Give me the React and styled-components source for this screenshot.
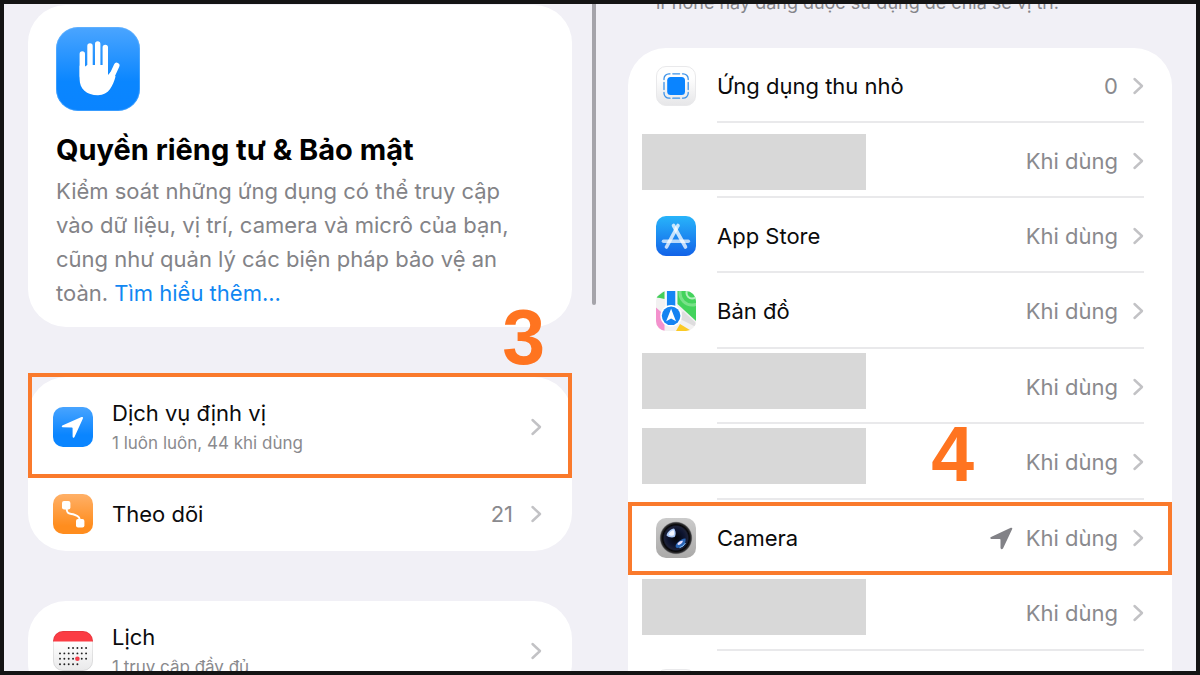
import React from 'react';
import styled, { createGlobalStyle } from 'styled-components';

const GlobalStyle = createGlobalStyle`
  * {
    box-sizing: border-box;
  }

  body {
    margin: 0;
    font-family: Inter, 'Noto Sans', sans-serif;
    color: #0b0b0c;
  }
`;

const Frame = styled.div`
  display: flex;
  height: 100vh;
  border: 4px solid #141414;
  background: #f1f0f6;
  overflow: hidden;
`;

const Pane = styled.section`
  position: relative;
  flex: 1;
  min-width: 0;
  overflow: hidden;
`;

const LeftScroll = styled.div`
  display: flex;
  flex-direction: column;
  gap: 50px;
  padding: 1px 28px 0 24px;
`;

const RightScroll = styled.div`
  margin-top: -13px;
  padding: 0 24px 0 28px;
`;

const ScrollThumb = styled.div`
  position: absolute;
  top: 0;
  right: 4px;
  width: 4px;
  height: 301px;
  border-radius: 0 0 2px 2px;
  background: #a5a4aa;
`;

const Card = styled.div`
  border-radius: 38px;
  background: #fff;
`;

const IntroCard = styled(Card)`
  padding: 22px 28px 17px;
`;

const Title = styled.h1`
  margin: 21px 0 6px;
  font-size: 29px;
  font-weight: 700;
  line-height: 36px;
  color: #000;
`;

const Intro = styled.p`
  margin: 0;
  font-size: 22px;
  line-height: 34px;
  color: #838387;
`;

const Link = styled.a`
  color: #1187f2;
  text-decoration: none;
`;

const Note = styled.p`
  margin: 0 28px 33px;
  font-size: 18px;
  line-height: 24px;
  color: #85858a;
  white-space: nowrap;
`;

const RowButton = styled.button`
  position: relative;
  display: flex;
  gap: ${(p) => (p.$divided ? 21 : 19)}px;
  width: 100%;
  min-height: ${(p) => p.$height}px;
  padding: 0 ${(p) => (p.$divided ? 28 : 30)}px 0 ${(p) => (p.$divided ? 28 : 25)}px;
  border: 0;
  background: none;
  font: inherit;
  color: inherit;
  text-align: left;
  cursor: pointer;
`;

const IconSlot = styled.span`
  display: flex;
  align-items: center;
  width: 40px;
  flex: none;
`;

const RowBody = styled.span`
  display: flex;
  flex: 1;
  align-items: center;
  min-width: 0;
  box-shadow: ${(p) => (p.$divided ? 'inset 0 -2px #e9e9eb' : 'none')};
`;

const Texts = styled.span`
  display: flex;
  flex: 1;
  flex-direction: column;
  gap: 2px;
`;

const Label = styled.span`
  font-size: 22px;
  line-height: 30px;
`;

const Sub = styled.span`
  font-size: 17px;
  line-height: 26px;
  color: #8a8a8e;
`;

const Value = styled.span`
  display: flex;
  align-items: center;
  gap: 12px;
  margin-right: ${(p) => (p.$divided ? 14 : 17)}px;
  font-size: 22px;
  line-height: 30px;
  color: #8a8a8e;
`;

const Mask = styled.span`
  position: absolute;
  top: ${(p) => p.$top}px;
  left: 14px;
  width: 224px;
  height: 56px;
  background: #d8d8d8;
`;

const Highlight = styled.span`
  position: absolute;
  inset: ${(p) => p.$inset};
  border: 4px solid #fa7a2c;
  pointer-events: none;
`;

const Step = styled.span`
  position: absolute;
  top: ${(p) => p.$top}px;
  right: ${(p) => p.$right}px;
  font-family: 'Liberation Sans', Arial, sans-serif;
  font-size: 77px;
  font-weight: 700;
  line-height: 56px;
  color: #ff7420;
`;

const Chevron = () => (
  <svg width="12" height="20" viewBox="0 0 12 20" fill="none" aria-hidden="true">
    <path d="M2.500 3 10 10 2.500 17" stroke="#c2c2c5" strokeWidth="2.400" strokeLinecap="round" strokeLinejoin="round" />
  </svg>
);

const HandIcon = () => (
  <svg width="84" height="84" viewBox="0 0 84 84" display="block" aria-hidden="true">
    <defs>
      <linearGradient id="hand-bg" x1="0" y1="0" x2="0" y2="1">
        <stop offset="0" stopColor="#4ba5ff" />
        <stop offset="0.65" stopColor="#0a86ff" />
        <stop offset="1" stopColor="#0a84ff" />
      </linearGradient>
    </defs>
    <rect width="84" height="84" rx="22" fill="url(#hand-bg)" />
    <rect x="0.5" y="0.5" width="83" height="83" rx="21.5" fill="none" stroke="#7cc0ff" strokeOpacity="0.4" />
    <g stroke="#fff" strokeWidth="5.4" strokeLinecap="round" fill="none">
      <path d="M26.300 27v22M34 19v26M41.700 17v26M49.300 20.500v26" />
      <path d="M60.700 38.500 54.500 52" strokeWidth="5.600" />
    </g>
    <path
      d="M23.600 38.500c2 2.500 4 2.500 5.500 1l2.200-1.500h20.700V48l4-4.500 3.500 6c-2.500 9-6.500 18.700-17.500 18.700-11.600 0-18.400-6.200-18.400-16.200z"
      fill="#fff"
    />
  </svg>
);

const LocationIcon = () => (
  <svg width="40" height="40" viewBox="0 0 40 40" aria-hidden="true">
    <defs>
      <linearGradient id="loc-bg" x1="0" y1="0" x2="0" y2="1">
        <stop offset="0" stopColor="#48a4ff" />
        <stop offset="0.7" stopColor="#0a85ff" />
      </linearGradient>
    </defs>
    <rect width="40" height="40" rx="10" fill="url(#loc-bg)" />
    <path
      d="M9.300 18.600 28.500 10.100q2.200-.7 1.400 1.500L21.500 30q-1.500 1.900-1.900-.4V21.200q0-.8-.8-.8L9.500 20.300q-1.600-.7-.2-1.700z"
      fill="#fff"
    />
  </svg>
);

const TrackingIcon = () => (
  <svg width="40" height="40" viewBox="0 0 40 40" aria-hidden="true">
    <defs>
      <linearGradient id="track-bg" x1="0" y1="0" x2="0" y2="1">
        <stop offset="0" stopColor="#ffb067" />
        <stop offset="0.8" stopColor="#ff8d1e" />
      </linearGradient>
    </defs>
    <rect width="40" height="40" rx="10" fill="url(#track-bg)" />
    <path d="M13.500 12c0 10 3.500 7 8 8.700 4.500 1.500 5.700 3 5.700 9" stroke="#fff" strokeWidth="2" fill="none" />
    <rect x="9" y="7" width="8.400" height="8.400" rx="2" fill="#fff" />
    <rect x="23" y="25" width="8.400" height="8.400" rx="2" fill="#fff" />
  </svg>
);

const calendarRows = [
  [2, 7],
  [0, 7],
  [0, 7],
  [0, 5],
];

const CalendarIcon = () => (
  <svg width="40" height="40" viewBox="0 0 40 40" aria-hidden="true">
    <defs>
      <linearGradient id="cal-bg" x1="0" y1="0" x2="0" y2="1">
        <stop offset="0.3" stopColor="#fdfdfd" />
        <stop offset="1" stopColor="#e9e9ea" />
      </linearGradient>
      <clipPath id="cal-clip">
        <rect width="40" height="40" rx="10" />
      </clipPath>
    </defs>
    <g clipPath="url(#cal-clip)">
      <rect width="40" height="40" fill="url(#cal-bg)" />
      <rect width="40" height="10.500" fill="#fb3c44" />
    </g>
    <rect x="0.5" y="0.5" width="39" height="39" rx="9.500" fill="none" stroke="#000" strokeOpacity="0.08" />
    {calendarRows.map(([from, to], y) =>
      Array(to - from).fill(0).map((_, i) => (
        <circle key={`${y}-${i}`} cx={7 + (from + i) * 4.350} cy={17 + y * 5.400} r="0.950" fill="#222" />
      ))
    )}
    <circle cx="24.400" cy="27.800" r="2.300" fill="#f5404c" />
  </svg>
);

const ClipIcon = () => (
  <svg width="40" height="40" viewBox="0 0 40 40" aria-hidden="true">
    <defs>
      <linearGradient id="clip-bg" x1="0" y1="0" x2="0" y2="1">
        <stop offset="0.3" stopColor="#fefefe" />
        <stop offset="1" stopColor="#e6e6e8" />
      </linearGradient>
    </defs>
    <rect x="0.5" y="0.5" width="39" height="39" rx="9.500" fill="url(#clip-bg)" stroke="#e9e9eb" />
    <rect x="11.200" y="11" width="17.800" height="18" rx="3.500" fill="#0a84ff" />
    <g fill="none" stroke="#3c92e8" strokeWidth="1.300" strokeLinecap="round">
      <path d="M8 13.500v-.7A5 5 0 0 1 13 7.800h1M26.500 7.800h.7a5 5 0 0 1 5 5v.7M32.200 26.500v.7a5 5 0 0 1-5 5h-.7M14 32.200h-1a5 5 0 0 1-5-5v-.7" />
      <path d="M16.800 7.800h6.800M16.800 32.200h6.800M8 16.500v7M32.200 16.500v7" />
    </g>
  </svg>
);

const AppStoreIcon = () => (
  <svg width="40" height="40" viewBox="0 0 40 40" aria-hidden="true">
    <defs>
      <linearGradient id="store-bg" x1="0" y1="0" x2="0" y2="1">
        <stop offset="0" stopColor="#28b4fa" />
        <stop offset="1" stopColor="#1262e8" />
      </linearGradient>
    </defs>
    <rect width="40" height="40" rx="10" fill="url(#store-bg)" />
    <g stroke="#fff" strokeWidth="3.600" strokeLinecap="round" fill="none">
      <path d="M7.500 25.200h24.800" strokeOpacity="0.7" />
      <path d="M22 9.500 10.500 31" strokeOpacity="0.75" />
      <path d="M17.500 9.500 29.500 31" strokeOpacity="0.75" />
    </g>
  </svg>
);

const MapIcon = () => (
  <svg width="40" height="40" viewBox="0 0 40 40" aria-hidden="true">
    <defs>
      <clipPath id="map-clip">
        <rect width="40" height="40" rx="10" />
      </clipPath>
    </defs>
    <g clipPath="url(#map-clip)">
      <rect width="40" height="40" fill="#f2f1f1" />
      <path d="M0 6.500 8.500 0v8L4 7z" fill="#43cf59" />
      <path d="M21.500 0H40v30L21.500 13z" fill="#43d35c" />
      <g fill="none" stroke="#b3f0bc">
        <circle cx="36" cy="2" r="5.500" strokeWidth="2" />
        <circle cx="36" cy="2" r="12" stroke="#78e188" strokeWidth="3" />
      </g>
      <path d="M0 16.500 8.500 24V40H0z" fill="#f391cd" />
      <path d="M24 33 35.500 40H20z" fill="#fbca24" />
      <path d="M27 20 40 32v4L22 27z" fill="#deddde" />
      <rect x="9.500" width="11" height="18" fill="#fff" />
      <rect x="10.900" width="8.400" height="18" fill="#1585f4" />
      <circle cx="15.100" cy="24.800" r="10.800" fill="#fff" />
      <circle cx="15.100" cy="24.800" r="9.300" fill="#1583f1" />
      <path d="M15.100 17.800 20 30.300 15.100 27.600 10.200 30.300z" fill="#fff" />
    </g>
  </svg>
);

const CameraIcon = () => (
  <svg width="40" height="40" viewBox="0 0 40 40" aria-hidden="true">
    <defs>
      <linearGradient id="cam-bg" x1="0" y1="0" x2="0" y2="1">
        <stop offset="0" stopColor="#cbcbcb" />
        <stop offset="1" stopColor="#aaa9a8" />
      </linearGradient>
      <radialGradient id="cam-lens">
        <stop offset="0" stopColor="#030508" />
        <stop offset="0.5" stopColor="#0d1430" />
        <stop offset="0.72" stopColor="#1c2138" />
        <stop offset="0.82" stopColor="#050507" />
        <stop offset="0.93" stopColor="#303032" />
        <stop offset="1" stopColor="#8e8e90" />
      </radialGradient>
    </defs>
    <rect width="40" height="40" rx="10" fill="url(#cam-bg)" />
    <circle cx="20" cy="20" r="16.200" fill="url(#cam-lens)" />
    <path d="M18 10.500c1.800 2 2.300 6.500.5 8.500-2.200 1-6.500.3-8-1.500.5-3.500 4-6.500 7.500-7z" fill="#a9c7f5" />
    <path d="M17.500 12c1 2 1 4.500 0 5.500-1.500.4-3.700 0-5-.8.800-2.200 2.800-4.200 5-4.700z" fill="#f0f5ff" />
    <path d="M29.500 20.500c1 5-3 9.500-8.300 9.500-2.200-.5-2.200-3 .3-5.500 2.500-2.300 6-4.500 8-4z" fill="#2864b4" />
    <path d="M21.500 25.500c1-1.800 3.500-3 5.500-2.800-.5 2.600-3 4.400-5.200 4.300z" fill="#e8dfff" />
    <path d="M29.500 25a9.500 9.500 0 0 1-6 4.700" stroke="#8bc8ff" strokeWidth="1" fill="none" />
  </svg>
);

const BlankIcon = () => (
  <svg width="40" height="40" viewBox="0 0 40 40" aria-hidden="true">
    <rect x="0.5" y="0.5" width="39" height="39" rx="9.500" fill="#fafafa" stroke="#e9e9eb" />
  </svg>
);

const ArrowGlyph = () => (
  <svg width="24" height="24" viewBox="0 0 24 24" aria-hidden="true">
    <path
      d="M1 11 20.800 1.700q1.900-.4 1.400 1.400L13 22.600q-1.700 1.700-2.500-.5V13.800q0-.8-.8-.8L1.200 12.900q-1.800-.8-.2-1.900z"
      fill="#828287"
    />
  </svg>
);

const Row = ({ icon, label, sub, value, arrow, divided, maskTop, height, children }) => (
  <RowButton type="button" $divided={divided} $height={height}>
    <IconSlot>{icon}</IconSlot>
    <RowBody $divided={divided}>
      <Texts>
        {label && <Label>{label}</Label>}
        {sub && <Sub>{sub}</Sub>}
      </Texts>
      {value && (
        <Value $divided={divided}>
          {arrow && <ArrowGlyph />}
          {value}
        </Value>
      )}
      <Chevron />
    </RowBody>
    {maskTop && <Mask $top={maskTop} />}
    {children}
  </RowButton>
);

const App = () => {
  return (
    <>
      <GlobalStyle />
      <Frame>
        <Pane>
          <LeftScroll>
            <IntroCard>
              <HandIcon />
              <Title>Quyền riêng tư &amp; Bảo mật</Title>
              <Intro>
                Kiểm soát những ứng dụng có thể truy cập vào dữ liệu, vị trí, camera và micrô của bạn,
                cũng như quản lý các biện pháp bảo vệ an toàn. <Link href="#more">Tìm hiểu thêm...</Link>
              </Intro>
            </IntroCard>
            <Card>
              <Row icon={<LocationIcon />} label="Dịch vụ định vị" sub="1 luôn luôn, 44 khi dùng" height={100}>
                <Highlight $inset="-4px 0 -1px" />
                <Step $top={-68} $right={27}>3</Step>
              </Row>
              <Row icon={<TrackingIcon />} label="Theo dõi" value="21" height={74} />
            </Card>
            <Card>
              <Row icon={<CalendarIcon />} label="Lịch" sub="1 truy cập đầy đủ" height={100} />
            </Card>
          </LeftScroll>
          <ScrollThumb />
        </Pane>
        <Pane>
          <RightScroll>
            <Note>iPhone này đang được sử dụng để chia sẻ vị trí.</Note>
            <Card>
              <Row divided icon={<ClipIcon />} label="Ứng dụng thu nhỏ" value="0" height={75} />
              <Row divided maskTop={11} value="Khi dùng" height={75} />
              <Row divided icon={<AppStoreIcon />} label="App Store" value="Khi dùng" height={75} />
              <Row divided icon={<MapIcon />} label="Bản đồ" value="Khi dùng" height={76} />
              <Row divided maskTop={4} value="Khi dùng" height={75} />
              <Row divided maskTop={4} value="Khi dùng" height={76} />
              <Row divided arrow icon={<CameraIcon />} label="Camera" value="Khi dùng" height={75}>
                <Highlight $inset="2px 0 0" />
                <Step $top={-74} $right={198}>4</Step>
              </Row>
              <Row divided maskTop={4} value="Khi dùng" height={76} />
              <Row divided icon={<BlankIcon />} value="Khi dùng" height={75} />
            </Card>
          </RightScroll>
        </Pane>
      </Frame>
    </>
  );
};

export default App;
